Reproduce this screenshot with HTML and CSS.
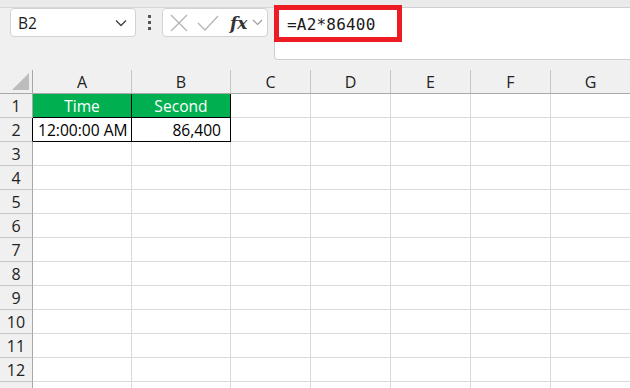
FILE: index.html
```html
<!DOCTYPE html>
<html lang="en">
<head>
    <meta charset="UTF-8">
    <title>Sheet - Time to seconds</title>
    <link rel="stylesheet" href="styles.css">
</head>
<body>

    <!-- Ribbon edge -->
    <div class="ribbon-edge"></div>

    <!-- Formula bar -->
    <div class="formula-bar">
        <div class="name-box">
            <span>B2</span>
            <svg class="chevron" width="12" height="8" viewBox="0 0 12 8"><path d="M1 1.5 L6 6.5 L11 1.5" fill="none" stroke="#444" stroke-width="1.4"/></svg>
        </div>
        <div class="dots"><i></i><i></i><i></i></div>
        <div class="fx-box">
            <svg width="18" height="18" viewBox="0 0 18 18"><path d="M1 1 L17 17 M17 1 L1 17" stroke="#b4b4b4" stroke-width="1.3"/></svg>
            <svg width="22" height="16" viewBox="0 0 22 16"><path d="M1 8 L8 15 L21 1" fill="none" stroke="#b4b4b4" stroke-width="1.3"/></svg>
            <span class="fx">fx</span>
            <svg width="11" height="7" viewBox="0 0 11 7"><path d="M1 1 L5.5 5.5 L10 1" fill="none" stroke="#9a9a9a" stroke-width="1.1"/></svg>
        </div>
        <div class="formula-input">
            <span class="formula-text">=A2*86400</span>
            <div class="highlight"></div>
        </div>
    </div>

    <!-- Sheet grid -->
    <div class="sheet">
        <div class="corner">
            <svg width="17" height="17" viewBox="0 0 17 17"><polygon points="17,0 17,17 0,17" fill="#bdbdbd"/></svg>
        </div>
        <div class="col-head">A</div>
        <div class="col-head">B</div>
        <div class="col-head">C</div>
        <div class="col-head">D</div>
        <div class="col-head">E</div>
        <div class="col-head">F</div>
        <div class="col-head">G</div>

        <div class="row-head">1</div>
        <div class="cell title">Time</div>
        <div class="cell title">Second</div>
        <div class="cell"></div><div class="cell"></div><div class="cell"></div><div class="cell"></div><div class="cell"></div>

        <div class="row-head data-edge">2</div>
        <div class="cell data">12:00:00 AM</div>
        <div class="cell data num">86,400</div>
        <div class="cell"></div><div class="cell"></div><div class="cell"></div><div class="cell"></div><div class="cell"></div>

        <div class="row-head">3</div>
        <div class="cell"></div><div class="cell"></div><div class="cell"></div><div class="cell"></div><div class="cell"></div><div class="cell"></div><div class="cell"></div>
        <div class="row-head">4</div>
        <div class="cell"></div><div class="cell"></div><div class="cell"></div><div class="cell"></div><div class="cell"></div><div class="cell"></div><div class="cell"></div>
        <div class="row-head">5</div>
        <div class="cell"></div><div class="cell"></div><div class="cell"></div><div class="cell"></div><div class="cell"></div><div class="cell"></div><div class="cell"></div>
        <div class="row-head">6</div>
        <div class="cell"></div><div class="cell"></div><div class="cell"></div><div class="cell"></div><div class="cell"></div><div class="cell"></div><div class="cell"></div>
        <div class="row-head">7</div>
        <div class="cell"></div><div class="cell"></div><div class="cell"></div><div class="cell"></div><div class="cell"></div><div class="cell"></div><div class="cell"></div>
        <div class="row-head">8</div>
        <div class="cell"></div><div class="cell"></div><div class="cell"></div><div class="cell"></div><div class="cell"></div><div class="cell"></div><div class="cell"></div>
        <div class="row-head">9</div>
        <div class="cell"></div><div class="cell"></div><div class="cell"></div><div class="cell"></div><div class="cell"></div><div class="cell"></div><div class="cell"></div>
        <div class="row-head">10</div>
        <div class="cell"></div><div class="cell"></div><div class="cell"></div><div class="cell"></div><div class="cell"></div><div class="cell"></div><div class="cell"></div>
        <div class="row-head">11</div>
        <div class="cell"></div><div class="cell"></div><div class="cell"></div><div class="cell"></div><div class="cell"></div><div class="cell"></div><div class="cell"></div>
        <div class="row-head">12</div>
        <div class="cell"></div><div class="cell"></div><div class="cell"></div><div class="cell"></div><div class="cell"></div><div class="cell"></div><div class="cell"></div>
        <div class="row-head"></div>
        <div class="cell"></div><div class="cell"></div><div class="cell"></div><div class="cell"></div><div class="cell"></div><div class="cell"></div><div class="cell"></div>
    </div>

</body>
</html>
```

FILE: styles.css
```css
/* Basic Reset */
* { margin: 0; padding: 0; box-sizing: border-box; }

body {
    font-family: "Open Sans", "Liberation Sans", sans-serif;
    background-color: #f0f0f0;
    color: #1a1a1a;
    width: 630px;
    height: 388px;
    overflow: hidden;
}

/* Ribbon edge */
.ribbon-edge {
    height: 8px;
    background: linear-gradient(#e9e9e9, #ececec);
    border-bottom: 1px solid #d6d6d6;
}

/* Formula Bar */
.formula-bar {
    display: flex;
    align-items: flex-start;
    height: 62px;
    padding-left: 10px;
}
.name-box {
    width: 126px;
    height: 29px;
    background-color: #fff;
    border: 1px solid #d2d2d2;
    border-radius: 4px;
    display: flex;
    align-items: center;
    justify-content: space-between;
    padding: 0 8px 0 7px;
    font-size: 15.5px;
}
.dots {
    width: 26px;
    height: 29px;
    display: flex;
    flex-direction: column;
    align-items: center;
    justify-content: center;
    gap: 3px;
}
.dots i {
    width: 3px;
    height: 3px;
    background-color: #555;
}
.fx-box {
    width: 106px;
    height: 29px;
    background-color: #fff;
    border: 1px solid #d2d2d2;
    border-radius: 4px;
    display: flex;
    align-items: center;
    padding-left: 7px;
    gap: 9px;
}
.fx-box .fx {
    font-family: "DejaVu Serif", "Liberation Serif", serif;
    font-style: italic;
    font-weight: bold;
    font-size: 17px;
    color: #333;
    margin-left: 2px;
    margin-right: -4px;
}
.formula-input {
    position: relative;
    flex: 1;
    height: 53px;
    margin-left: 6px;
    margin-top: -1px;
    background-color: #fff;
    border: 1px solid #cfcfcf;
    border-right: none;
    border-radius: 0 0 0 4px;
    padding: 5px 0 0 12px;
}
.formula-text {
    font-family: "DejaVu Sans Mono", "Liberation Mono", monospace;
    font-size: 16px;
    letter-spacing: 0.2px;
    color: #1a1a1a;
}
.highlight {
    position: absolute;
    left: -1px;
    top: -3px;
    width: 128px;
    height: 37px;
    border: 5px solid #ed1c24;
}

/* Sheet grid */
.sheet {
    display: grid;
    grid-template-columns: 33px 99px 99px repeat(5, 80px);
    grid-auto-rows: 24px;
    background-color: #fff;
    font-size: 15.6px;
}
.corner, .col-head, .row-head {
    background-color: #f0f0f0;
    color: #222;
    display: flex;
    align-items: center;
    justify-content: center;
}
.corner {
    align-items: flex-end;
    justify-content: flex-end;
    padding: 0 3px 3px 0;
    border-right: 1px solid #a8a8a8;
    border-bottom: 1px solid #a8a8a8;
}
.col-head {
    border-right: 1px solid #c6c6c6;
    border-bottom: 1px solid #a8a8a8;
    font-size: 16px;
}
.row-head {
    border-right: 1px solid #a8a8a8;
    border-bottom: 1px solid #c6c6c6;
    font-size: 16px;
}
.cell {
    border-right: 1px solid #dadada;
    border-bottom: 1px solid #dadada;
    display: flex;
    align-items: center;
    padding: 0 5px;
    white-space: nowrap;
}

/* Data table */
.title {
    background-color: #00b050;
    color: #fff;
    justify-content: center;
    border-right: 1px solid #000;
    border-bottom: 1px solid #000;
}
.data {
    color: #000;
    border-right: 1px solid #000;
    border-bottom: 1px solid #000;
}
.num {
    justify-content: flex-end;
    padding-right: 9px;
}
.data-edge {
    border-right-color: #000;
}
```
